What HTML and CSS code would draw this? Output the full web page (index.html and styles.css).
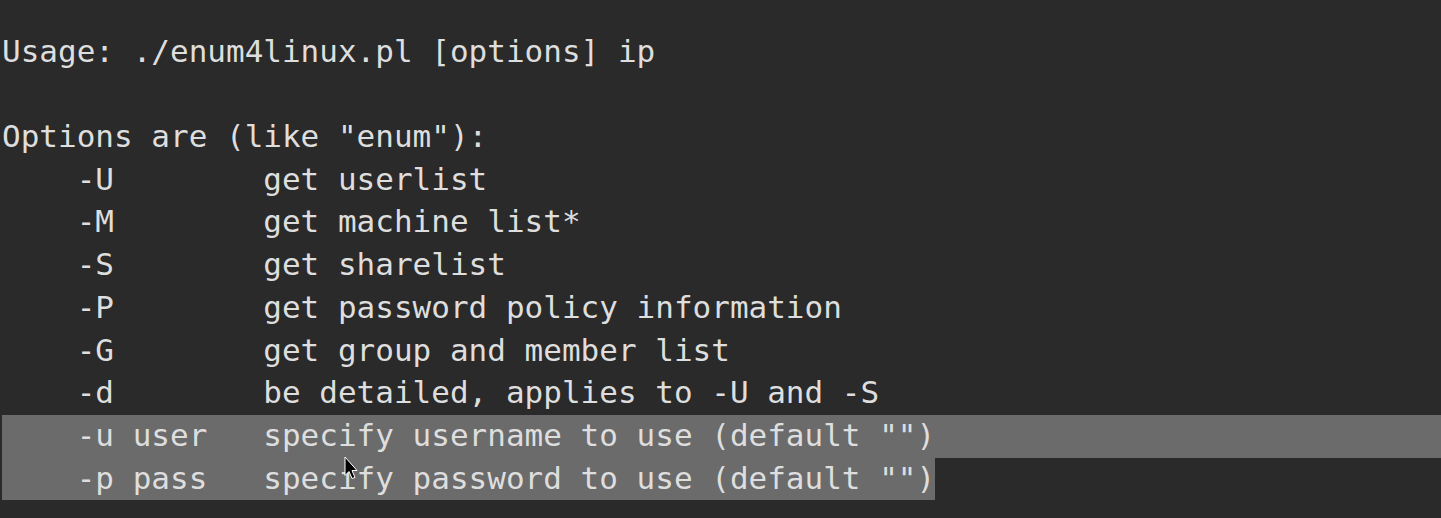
FILE: index.html
```html
<!DOCTYPE html>
<html>
<head>
<meta charset="utf-8">
<link rel="stylesheet" href="styles.css">
</head>
<body>
<div class="term">
<div class="line">Usage: ./enum4linux.pl [options] ip</div>
<div class="line"> </div>
<div class="line">Options are (like "enum"):</div>
<div class="line">    -U        get userlist</div>
<div class="line">    -M        get machine list*</div>
<div class="line">    -S        get sharelist</div>
<div class="line">    -P        get password policy information</div>
<div class="line">    -G        get group and member list</div>
<div class="line">    -d        be detailed, applies to -U and -S</div>
<div class="line sel">    -u user   specify username to use (default "")</div>
<div class="line"><span class="sel-part">    -p pass   specify password to use (default "")</span></div>
<svg class="pointer" width="14" height="25" viewBox="0 0 14 25"><path d="M1 1 L1 19.5 L5 15.5 L8 22.5 L11 21.5 L8 14.5 L13 14.5 Z" fill="#000" stroke="#fff" stroke-width="1"/></svg>
</div>
</body>
</html>
```
FILE: styles.css
```css
html, body {
  margin: 0;
  padding: 0;
  background: #2a2a2a;
  height: 100%;
  overflow: hidden;
}
.term {
  position: relative;
  padding: 30.7px 0 0 2px;
  font-family: "DejaVu Sans Mono", "Liberation Mono", monospace;
  font-size: 31px;
  color: #dedede;
}
.line {
  height: 42.7px;
  line-height: 40px;
  white-space: pre;
}
.sel {
  background: #6b6b6b;
}
.sel-part {
  display: inline-block;
  height: 42.7px;
  background: #6b6b6b;
}
.pointer {
  position: absolute;
  left: 344px;
  top: 456px;
}
```
